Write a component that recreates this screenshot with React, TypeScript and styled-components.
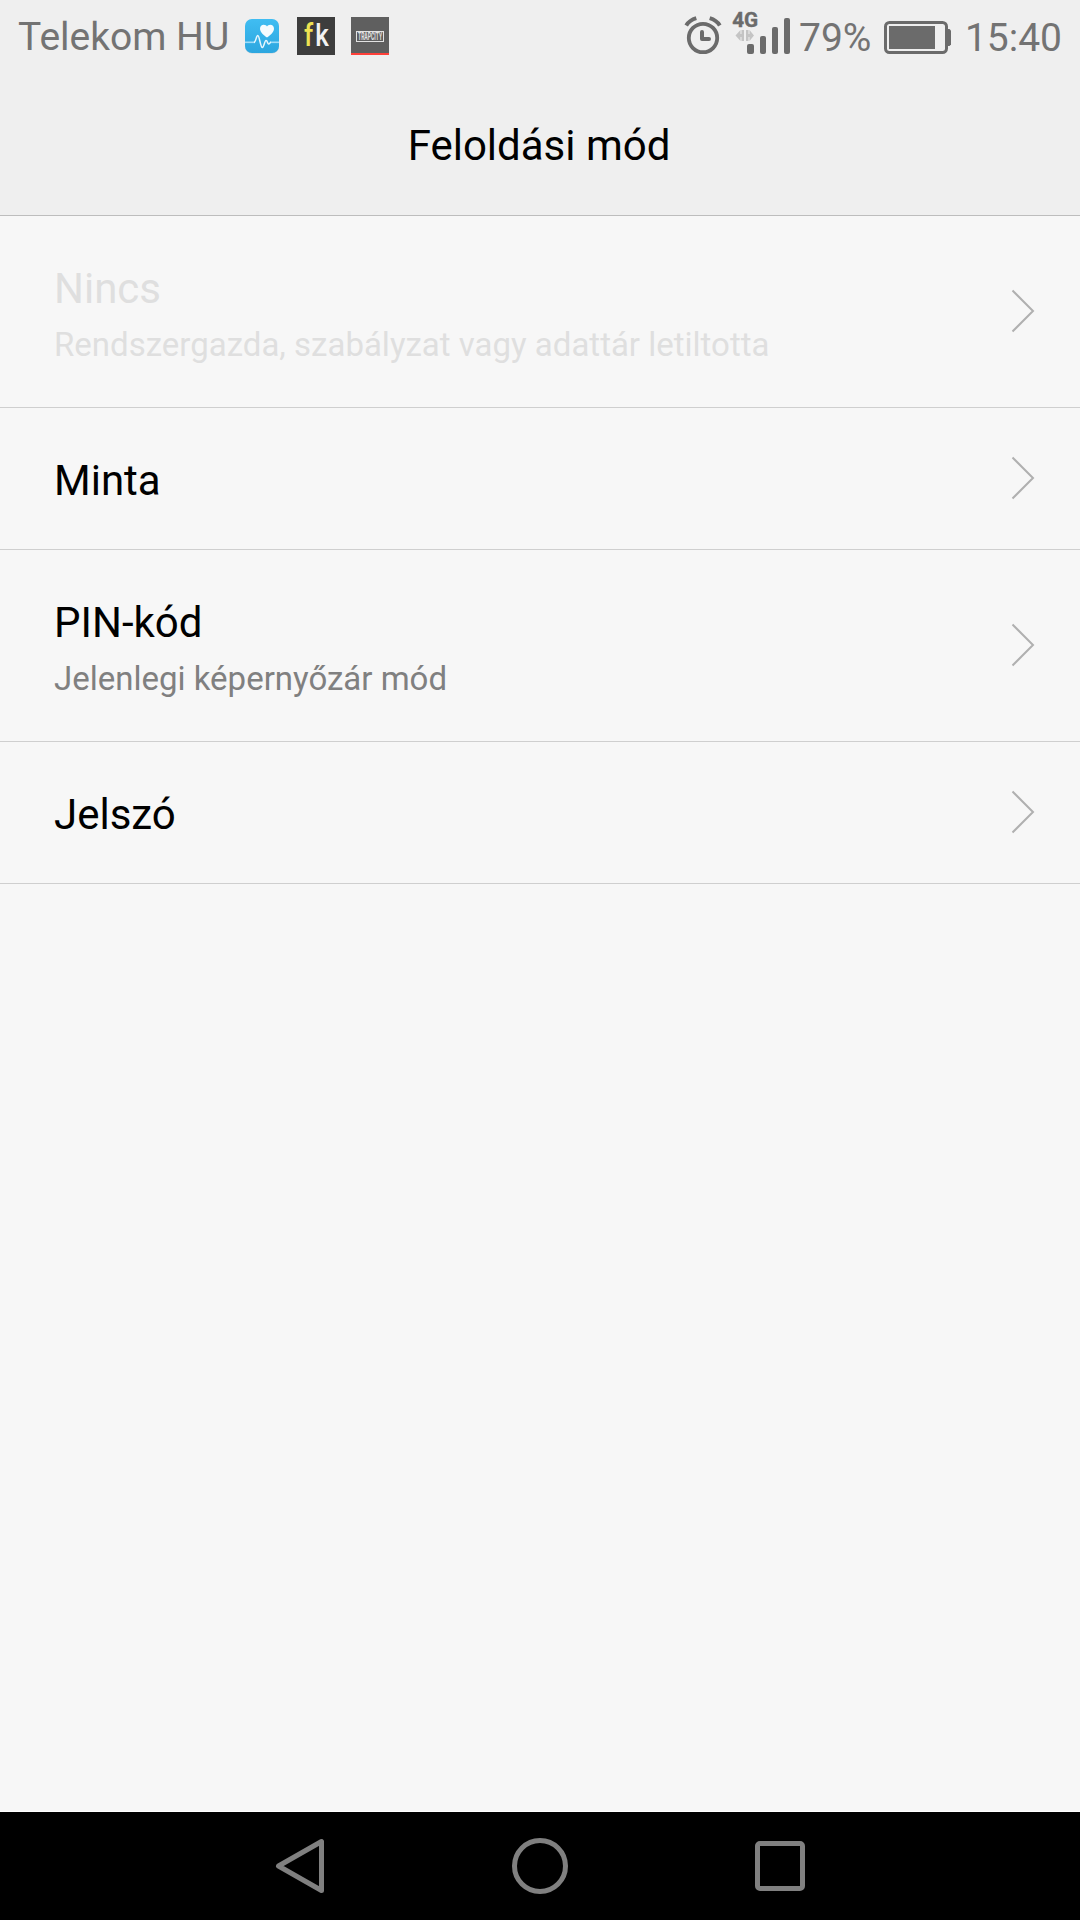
import React from "react";
import styled, { createGlobalStyle } from "styled-components";

const GlobalStyle = createGlobalStyle`
  * { box-sizing: border-box; }
  body { margin: 0; background: #f7f7f7; }
`;

const Screen = styled.div`
  display: flex;
  flex-direction: column;
  width: 1080px;
  height: 1920px;
  background: #f7f7f7;
  font-family: Roboto, "Noto Sans", sans-serif;
  color: #000;
  overflow: hidden;
`;

const StatusBar = styled.header`
  display: flex;
  justify-content: space-between;
  height: 72px;
  padding: 0 18px;
  background: #efefef;
  color: #737373;
`;

const StatusGroup = styled.div`
  display: flex;
  align-items: flex-start;

  svg { display: block; flex: none; overflow: visible; }
`;

const StatusText = styled.span<{ $width: number; $top?: number; $align?: string }>`
  flex: none;
  width: ${(p) => p.$width}px;
  padding-top: ${(p) => p.$top ?? 14}px;
  font-size: 39px;
  line-height: 48px;
  white-space: nowrap;
  text-align: ${(p) => p.$align ?? "left"};
`;

const TitleBar = styled.div`
  display: flex;
  justify-content: center;
  height: 144px;
  padding: 50px 2px 0 0;
  background: #efefef;
  border-bottom: 1px solid #bdbdbd;
`;

const Title = styled.h1`
  margin: 0;
  font-size: 42px;
  font-weight: 400;
  line-height: 48px;
`;

const List = styled.ul`
  flex: 1;
  margin: 0;
  padding: 0;
  list-style: none;
  border-bottom: 1px solid #fff;
`;

const Row = styled.li<{ $tall: boolean }>`
  display: flex;
  align-items: center;
  justify-content: space-between;
  height: ${(p) => (p.$tall ? 192 : 142)}px;
  padding: 0 45px 0 54px;
  border-bottom: 1px solid #cfcfcf;

  > svg { margin-bottom: 2px; }
`;

const RowText = styled.div<{ $disabled: boolean }>`
  align-self: flex-start;
  padding-top: 49px;
  color: ${(p) => (p.$disabled ? "#dfdfdf" : "#000")};
`;

const Label = styled.div`
  font-size: 42px;
  line-height: 48px;
`;

const Summary = styled.div<{ $disabled: boolean }>`
  margin-top: 12px;
  font-size: 33px;
  line-height: 40px;
  color: ${(p) => (p.$disabled ? "#dfdfdf" : "#808080")};
`;

const NavBar = styled.nav`
  display: grid;
  grid-template-columns: repeat(3, 240px);
  justify-content: center;
  justify-items: center;
  align-items: center;
  height: 108px;
  background: #000;

  svg { display: block; }
`;

const Chevron = () => (
  <svg width="24" height="44" viewBox="0 0 24 44" fill="none" stroke="#b0b0b0" strokeWidth="2">
    <path d="M1.5 1.5 22 22 1.5 42.5" />
  </svg>
);

const HealthIcon = () => (
  <svg width="36" height="72" viewBox="0 0 36 72">
    <defs>
      <linearGradient id="sky" x1="0" y1="0" x2="0" y2="1">
        <stop offset="0" stopColor="#40bdf2" />
        <stop offset="1" stopColor="#2ca6df" />
      </linearGradient>
    </defs>
    <rect x="1" y="19.5" width="34" height="34" rx="7" fill="#c9d3d8" />
    <rect x="1" y="19" width="34" height="34" rx="7" fill="url(#sky)" />
    <path d="M1 42.3H11" stroke="#9fdcf8" strokeWidth="1.6" />
    <path d="M26 42.3H35" stroke="#9fdcf8" strokeWidth="1.6" />
    <path
      d="M10 42.5C12 42 12.200 35.500 13.800 35.500S16.500 47.500 18.300 47.500S20.500 40.500 22 40.500S23.500 44 24.600 44S26 42.300 27 42.300"
      fill="none"
      stroke="#e8f7fe"
      strokeWidth="1.5"
    />
    <path
      d="M23 37.500C20 35.500 16 32.300 16 28.800C16 26.300 17.800 24.800 19.700 24.800C21.400 24.800 22.500 25.600 23 26.600C23.600 25.600 24.700 24.800 26.300 24.800C28.300 24.800 30 26.300 30 28.800C30 32.300 26 35.500 23 37.500Z"
      fill="#f5fbfe"
    />
  </svg>
);

const KeyboardIcon = () => (
  <svg width="38" height="72" viewBox="0 0 38 72" fontFamily="Roboto, sans-serif" fontWeight="500" fontSize="31">
    <rect y="17" width="38" height="38" fill="#3d3d3d" />
    <text transform="translate(7 46) scale(0.840 1)" fill="#eee352">
      f
      <tspan x="13.500" fill="#f2f2f2">k</tspan>
    </text>
  </svg>
);

const TrapCityIcon = () => (
  <svg width="38" height="72" viewBox="0 0 38 72" fontFamily="Roboto, sans-serif">
    <rect y="17" width="38" height="36" fill="#5f5f5f" />
    <rect y="53" width="38" height="2" fill="#ff4039" />
    <rect x="5.500" y="31.500" width="27" height="10" fill="none" stroke="#e2e2e2" />
    <text x="7" y="40" fontSize="10.500" fontWeight="700" fill="#e2e2e2" textLength="24" lengthAdjust="spacingAndGlyphs">
      TRAPCITY
    </text>
  </svg>
);

const AlarmIcon = () => (
  <svg width="36" height="72" viewBox="0 0 36 72" fill="none" stroke="#6b6b6b">
    <circle cx="18" cy="38" r="14.200" strokeWidth="3.800" />
    <path d="M17 32V39H24" strokeWidth="4" strokeLinejoin="round" strokeLinecap="round" />
    <path d="M1.200 25.500Q4.500 20.200 11.300 18.200" strokeWidth="4" />
    <path d="M34.800 25.500Q31.500 20.200 24.700 18.200" strokeWidth="4" />
  </svg>
);

const SignalIcon = () => (
  <svg width="58" height="72" viewBox="0 0 58 72" fill="#6b6b6b">
    <text x="-0.800" y="27" fontFamily="Roboto, sans-serif" fontSize="21" fontWeight="700" stroke="#6b6b6b" strokeWidth="0.400" textLength="26" lengthAdjust="spacingAndGlyphs">
      4G
    </text>
    <path d="M2.500 35.500 7.500 30V34H8.500V30H11V41H8.500V37H7.500V41ZM13 30H15.500V34H16.500V30L21 35.500 16.500 41V37H15.500V41H13Z" fill="#c4c4c4" />
    <rect x="13" y="42" width="9.500" height="13" fill="#efefef" />
    <rect x="14" y="44" width="7" height="10" rx="2" />
    <rect x="27" y="36" width="6" height="18" rx="2" />
    <rect x="39" y="27" width="6" height="27" rx="2" />
    <rect x="51" y="18" width="6" height="36" rx="2" />
  </svg>
);

const BatteryIcon = () => (
  <svg width="68" height="72" viewBox="0 0 68 72" fill="#6b6b6b">
    <rect x="1.500" y="22.500" width="61" height="30" rx="4" fill="none" stroke="#6b6b6b" strokeWidth="3" />
    <rect x="5" y="26" width="46" height="23" />
    <path d="M63 29H65.500L67 30.500V44.500L65.500 46H63Z" />
  </svg>
);

const BackIcon = () => (
  <svg width="60" height="60" viewBox="0 0 60 60" fill="none" stroke="#808080" strokeWidth="5" strokeLinejoin="round">
    <path d="M8.500 30 51.500 5.500V54.500Z" />
  </svg>
);

const HomeIcon = () => (
  <svg width="60" height="60" viewBox="0 0 60 60" fill="none" stroke="#808080" strokeWidth="5">
    <circle cx="30" cy="30" r="25.500" />
  </svg>
);

const RecentsIcon = () => (
  <svg width="60" height="60" viewBox="0 0 60 60" fill="none" stroke="#808080" strokeWidth="5">
    <rect x="7.500" y="7.500" width="45" height="45" rx="2.500" />
  </svg>
);

const LeftIcons = styled.div`
  display: flex;
  gap: 16px;

  svg:first-child { margin-right: 1px; }
`;

const SignalSlot = styled.div`
  margin: 0 8px 0 12px;
`;

const BatterySlot = styled.div`
  margin-left: 12px;
`;

type Option = { label: string; summary?: string; disabled?: boolean };

const options: Option[] = [
  { label: "Nincs", summary: "Rendszergazda, szabályzat vagy adattár letiltotta", disabled: true },
  { label: "Minta" },
  { label: "PIN-kód", summary: "Jelenlegi képernyőzár mód" },
  { label: "Jelszó" },
];

export default function App() {
  return (
    <>
      <GlobalStyle />
      <Screen>
        <StatusBar>
          <StatusGroup>
            <StatusText $width={226} $top={13}>Telekom HU</StatusText>
            <LeftIcons>
              <HealthIcon />
              <KeyboardIcon />
              <TrapCityIcon />
            </LeftIcons>
          </StatusGroup>
          <StatusGroup>
            <AlarmIcon />
            <SignalSlot>
              <SignalIcon />
            </SignalSlot>
            <StatusText $width={73}>79%</StatusText>
            <BatterySlot>
              <BatteryIcon />
            </BatterySlot>
            <StatusText $width={110} $align="right">15:40</StatusText>
          </StatusGroup>
        </StatusBar>
        <TitleBar>
          <Title>Feloldási mód</Title>
        </TitleBar>
        <List>
          {options.map(({ label, summary, disabled = false }) => (
            <Row key={label} $tall={Boolean(summary)}>
              <RowText $disabled={disabled}>
                <Label>{label}</Label>
                {summary && <Summary $disabled={disabled}>{summary}</Summary>}
              </RowText>
              <Chevron />
            </Row>
          ))}
        </List>
        <NavBar>
          <BackIcon />
          <HomeIcon />
          <RecentsIcon />
        </NavBar>
      </Screen>
    </>
  );
}
